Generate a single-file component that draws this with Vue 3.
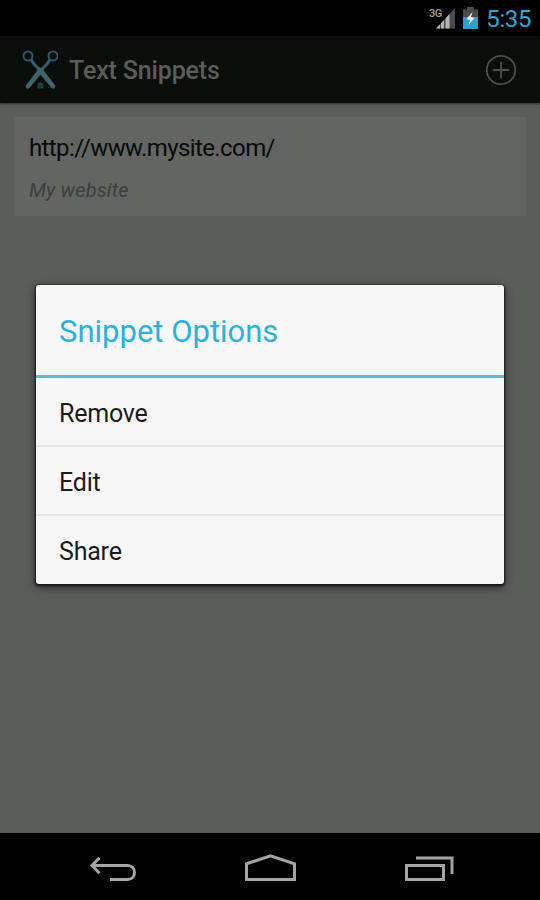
<script setup>
import { ref } from 'vue'

const time = ref('5:35')

const snippets = ref([
  { text: 'http://www.mysite.com/', note: 'My website' }
])

const options = ref(['Remove', 'Edit', 'Share'])
</script>

<template>
  <div class="phone">
    <header class="status-bar">
      <svg class="signal" width="27" height="22" viewBox="0 0 27 22">
        <path d="M7 21.5 L26 1 V21.5 Z" fill="#4b4b4b" />
        <path d="M7 21.5 L11 17.3 V21.5 Z M12 16.2 L15 13 V21.5 H12 Z M16.5 11.4 L20.5 7 V21.5 H16.5 Z" fill="#b5b5b5" />
        <text class="network" x="0" y="9.5">3G</text>
      </svg>
      <svg class="battery" width="15" height="22" viewBox="0 0 15 22">
        <path d="M4 0 H11 V2.5 H15 V10 H0 V2.5 H4 Z" fill="#4a4a4a" />
        <path d="M0 10 H15 V22 H0 Z" fill="#2f9fcb" />
        <path d="M9.5 5 L3.5 12 L7 13 L5.5 18 L11.5 11 L8 10 Z" fill="#f4f4f4" />
      </svg>
      <span class="clock">{{ time }}</span>
    </header>

    <div class="action-bar">
      <svg class="logo" width="36" height="40" viewBox="0 0 36 40" fill="none">
        <g stroke="#2f5566" stroke-width="2">
          <circle cx="6" cy="6" r="4.5" />
          <circle cx="31" cy="6" r="4.5" />
        </g>
        <path d="M9 9.5 L12 14 L19 21 M28 9.5 L25 14 L18 21" stroke="#345d6c" stroke-width="3" />
        <path d="M16 17 L21 19.5 L33.5 36 L32 39 L29.5 38 L15.5 21 Z" fill="#3f646c" />
        <path d="M21 17 L16 19.5 L3.5 36 L5 39 L7.5 38 L21.5 21 Z" fill="#3f646c" />
        <path d="M15.5 34 Q18.5 30.5 21.5 34 V38.5 H15.5 Z" fill="#1f4937" />
        <path d="M17.3 36 H20 M16 38 H19" stroke="#0f261c" stroke-width=".7" />
      </svg>
      <h1 class="app-title">Text Snippets</h1>
      <svg class="add" width="32" height="32" viewBox="0 0 32 32" fill="none" stroke="#4b4e4b">
        <circle cx="16" cy="16" r="14.2" stroke-width="1.8" />
        <path d="M16 7.8 V24.2 M7.8 16 H24.2" stroke-width="1.8" />
      </svg>
    </div>

    <main class="content">
      <div v-for="item in snippets" :key="item.text" class="snippet">
        <div class="snippet-text">{{ item.text }}</div>
        <div class="snippet-note">{{ item.note }}</div>
      </div>

      <section class="dialog">
        <h2 class="dialog-title">Snippet Options</h2>
        <ul class="options">
          <li v-for="option in options" :key="option">
            <span>{{ option }}</span>
          </li>
        </ul>
      </section>
    </main>

    <nav class="nav-bar">
      <svg width="50" height="30" viewBox="0 0 50 30">
        <path d="M11.5 4.8 L4 12.5 L11.5 20.3 M4.5 12.5 H39.5 C48.8 12.5 48.8 26.5 39.5 26.5 H22" />
      </svg>
      <svg width="54" height="30" viewBox="0 0 54 30">
        <path d="M2.5 26.5 V10.8 L26.5 2.8 L50.5 10.8 V26.5 Z" />
      </svg>
      <svg width="50" height="30" viewBox="0 0 50 30">
        <path d="M2.5 12.5 H39.5 V26.5 H2.5 Z M12 5 H48 V21" />
      </svg>
    </nav>
  </div>
</template>

<style>
body {
  margin: 0;
  background: #000;
}
</style>

<style scoped>
.phone {
  width: 540px;
  height: 900px;
  display: flex;
  flex-direction: column;
  overflow: hidden;
  background: #5a5d59;
  font-family: Roboto, sans-serif;
}

/* Status bar */
.status-bar {
  height: 36px;
  flex: none;
  box-sizing: border-box;
  padding-right: 9px;
  display: flex;
  justify-content: flex-end;
  align-items: center;
  background: #000;
}

.signal {
  margin: 0 7px 0 0;
}

.network {
  font: 500 11px Roboto, sans-serif;
  letter-spacing: -.4px;
  fill: #a0a0a0;
}

.battery {
  margin: 0 8px 1px 0;
}

.clock {
  padding-top: 2px;
  font-size: 24px;
  line-height: 34px;
  letter-spacing: -.4px;
  color: #33a5d4;
}

/* Action bar */
.action-bar {
  height: 67px;
  flex: none;
  box-sizing: border-box;
  padding: 0 23px 0 22px;
  display: flex;
  align-items: center;
  background: #0a0d09;
  box-shadow: 0 1px 2px #292c28;
}

.logo {
  margin-right: 11px;
}

.app-title {
  margin: 3px auto 0 0;
  font-size: 25px;
  font-weight: 500;
  line-height: 32px;
  letter-spacing: -.15px;
  color: #5a5d5a;
}

/* Snippet list */
.content {
  flex: 1;
  padding: 14px 14px 0;
}

.snippet {
  height: 99px;
  box-sizing: border-box;
  padding: 16px 15px 0;
  background: #626561;
}

.snippet-text {
  font-size: 24px;
  line-height: 30px;
  letter-spacing: -.6px;
  color: #080a08;
}

.snippet-note {
  margin-top: 14px;
  font-size: 20px;
  font-style: italic;
  line-height: 26px;
  letter-spacing: .15px;
  color: #3d403d;
}

/* Dialog */
.dialog {
  width: 468px;
  margin: 69px auto 0;
  border-radius: 3px;
  overflow: hidden;
  background: #f7f7f7;
  box-shadow: 0 1px 2px 1px #151a14, 0 3px 9px 1px rgba(0, 0, 0, .45);
}

.dialog-title {
  height: 93px;
  box-sizing: border-box;
  margin: 0;
  padding: 28px 23px 0;
  border-bottom: 3px solid #5db8e0;
  font-size: 31px;
  font-weight: 400;
  line-height: 38px;
  color: #2cb1dc;
}

.options {
  margin: 0;
  padding: 0;
  list-style: none;
}

.options li {
  height: 69px;
  box-sizing: border-box;
  padding: 3px 23px 0;
  display: flex;
  align-items: center;
  font-size: 25px;
  letter-spacing: -.2px;
  color: #1b1b1b;
}

.options li:not(:last-child) {
  border-bottom: 2px solid #e4e4e4;
}

.options li:last-child {
  height: 68px;
}

/* Navigation buttons */
.nav-bar {
  height: 67px;
  flex: none;
  box-sizing: border-box;
  padding: 3px 86px 0 88px;
  display: flex;
  justify-content: space-between;
  align-items: center;
  background: #000;
}

.nav-bar path {
  fill: none;
  stroke: #a5a5a5;
  stroke-width: 3;
}
</style>
